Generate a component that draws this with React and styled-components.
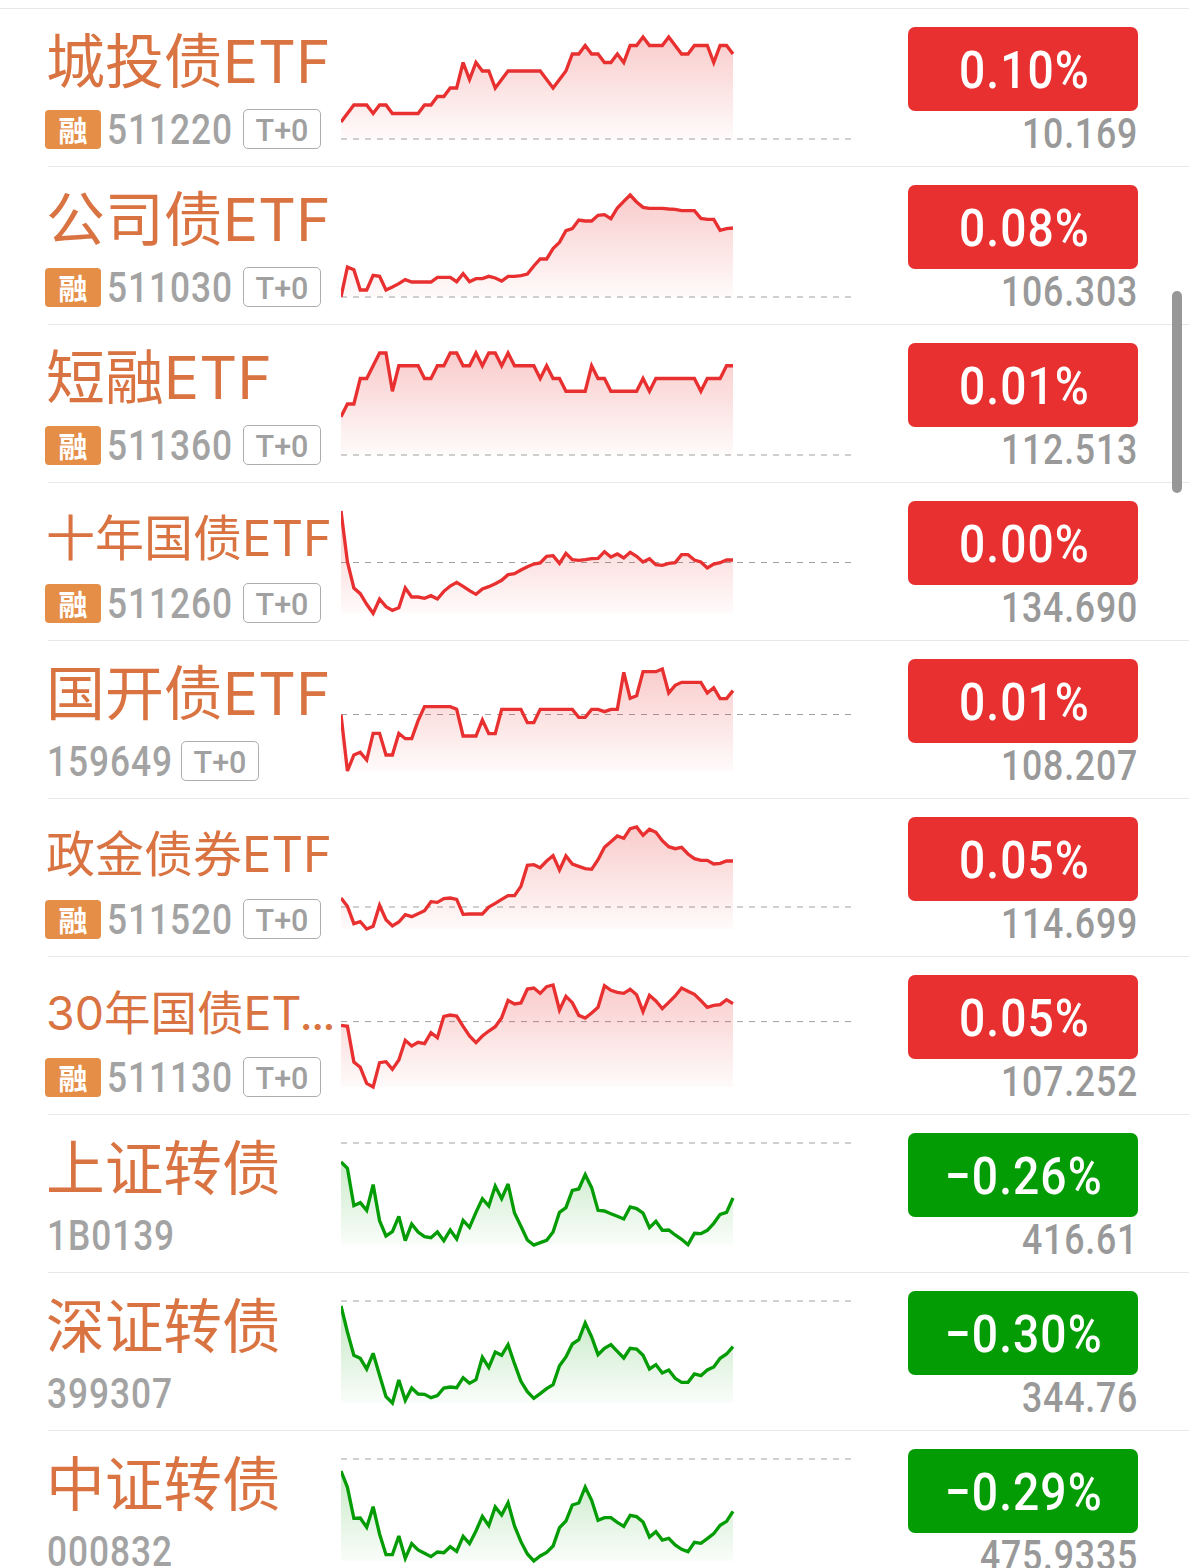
import React from 'react';
import styled, { createGlobalStyle } from 'styled-components';

// Chart samples are y positions in 1/3 px, counted down from the row divider.
const BOTTOM = 393;
const RANGE = 306;
const STEP = 1176 / 61;

const fromTicks = (ticks, max) => ticks.map((t) => BOTTOM - (t * RANGE) / max);

const rows = [
  {
    name: '城投债ETF', code: '511220', margin: true, t0: true, change: '0.10%', price: '10.169', base: 393,
    data: fromTicks([
      2, 3, 4, 4, 4, 3, 4, 4, 3, 3, 3, 3, 3, 4, 4, 5, 5, 6, 6, 9, 7, 9, 8, 8, 6, 7, 8, 8, 8, 8, 8, 8, 7, 6, 7, 8, 10, 10,
      11, 10, 10, 9, 9, 10, 9, 11, 11, 12, 11, 11, 11, 12, 11, 10, 10, 11, 11, 11, 9, 11, 11, 10,
    ], 12),
  },
  {
    name: '公司债ETF', code: '511030', margin: true, t0: true, change: '0.08%', price: '106.303', base: 393,
    data: [
      393, 303, 311, 372, 372, 328, 331, 372, 363, 353, 341, 348, 348, 348, 348, 334, 334, 334, 347, 323, 347, 338, 338,
      331, 336, 345, 331, 331, 329, 324, 300, 279, 279, 248, 229, 194, 188, 162, 165, 165, 148, 146, 158, 126, 106, 87,
      108, 124, 127, 127, 127, 129, 130, 134, 134, 134, 157, 160, 160, 193, 188, 186,
    ],
  },
  {
    name: '短融ETF', code: '511360', margin: true, t0: true, change: '0.01%', price: '112.513', base: 393,
    data: fromTicks([
      3, 4, 4, 6, 6, 7, 8, 8, 5, 7, 7, 7, 7, 6, 6, 7, 7, 8, 8, 7, 7, 8, 7, 8, 8, 7, 8, 7, 7, 7, 7, 6, 7, 6, 6, 5, 5, 5,
      5, 7, 6, 6, 5, 5, 5, 5, 5, 6, 5, 6, 6, 6, 6, 6, 6, 6, 5, 6, 6, 6, 7, 7,
    ], 8),
  },
  {
    name: '十年国债ETF', size: 'small', code: '511260', margin: true, t0: true, change: '0.00%', price: '134.690', base: 241.5,
    data: [
      87, 240, 318, 335, 367, 394, 351, 374, 385, 377, 318, 345, 345, 349, 341, 351, 328, 312, 301, 313, 326, 337, 321,
      314, 305, 295, 278, 275, 264, 254, 246, 243, 223, 221, 244, 214, 233, 235, 233, 230, 229, 209, 225, 216, 228, 211,
      223, 240, 230, 248, 250, 244, 242, 218, 218, 234, 240, 258, 246, 242, 234, 234,
    ],
  },
  {
    name: '国开债ETF', code: '159649', t0: true, change: '0.01%', price: '108.207', base: 223.5,
    data: [
      224, 393, 345, 337, 360, 280, 280, 345, 345, 280, 296, 296, 242, 200, 200, 200, 200, 200, 208, 288, 288, 288, 240,
      281, 281, 208, 208, 208, 208, 248, 248, 208, 208, 208, 208, 208, 208, 232, 232, 208, 208, 215, 208, 208, 97, 175,
      167, 95, 95, 95, 87, 159, 136, 127, 127, 127, 127, 159, 143, 176, 176, 152,
    ],
  },
  {
    name: '政金债券ETF', size: 'small', code: '511520', margin: true, t0: true, change: '0.05%', price: '114.699', base: 327,
    data: [
      300, 325, 377, 371, 393, 385, 322, 365, 384, 372, 350, 356, 347, 338, 311, 313, 302, 300, 304, 349, 348, 348, 348,
      327, 316, 304, 293, 293, 265, 202, 200, 209, 189, 173, 216, 174, 198, 205, 212, 214, 185, 148, 131, 114, 121, 92,
      87, 112, 94, 103, 128, 146, 152, 148, 168, 182, 187, 187, 198, 196, 189, 189,
    ],
  },
  {
    name: '30年国债ET', clipped: true, size: 'tiny', code: '511130', margin: true, t0: true, change: '0.05%', price: '107.252', base: 196.8,
    data: [
      208, 211, 318, 334, 382, 393, 320, 317, 340, 312, 253, 270, 259, 263, 230, 245, 181, 177, 180, 211, 240, 260, 240,
      225, 212, 185, 133, 144, 141, 99, 96, 112, 92, 87, 162, 121, 140, 178, 186, 171, 154, 89, 103, 109, 112, 100, 116,
      167, 118, 135, 158, 139, 120, 96, 106, 115, 134, 154, 148, 146, 131, 143,
    ],
  },
  {
    name: '上证转债', size: 'index', code: '1B0139', down: true, change: '−0.26%', price: '416.61', base: 87,
    data: [
      144, 163, 275, 266, 289, 212, 320, 366, 353, 307, 380, 330, 354, 368, 371, 354, 380, 348, 375, 319, 340, 295, 254,
      276, 216, 254, 210, 297, 337, 378, 393, 386, 379, 354, 295, 281, 229, 225, 182, 221, 289, 291, 299, 307, 315, 279,
      284, 297, 341, 322, 349, 348, 363, 376, 392, 358, 359, 349, 328, 301, 295, 252,
    ],
  },
  {
    name: '深证转债', size: 'index', code: '399307', down: true, change: '−0.30%', price: '344.76', base: 87,
    data: [
      102, 180, 250, 259, 291, 244, 310, 374, 393, 324, 385, 348, 366, 367, 377, 371, 348, 345, 347, 317, 334, 323, 256,
      286, 240, 250, 218, 275, 328, 359, 379, 365, 350, 338, 281, 255, 216, 203, 153, 195, 248, 229, 218, 238, 258, 229,
      231, 250, 291, 278, 303, 294, 319, 331, 331, 306, 311, 294, 285, 259, 246, 224,
    ],
  },
  {
    name: '中证转债', size: 'index', code: '000832', down: true, change: '−0.29%', price: '475.9335', base: 87,
    data: [
      123, 172, 265, 264, 292, 230, 312, 374, 374, 318, 385, 341, 360, 370, 380, 366, 368, 350, 364, 319, 341, 303, 259,
      287, 231, 255, 218, 288, 335, 372, 393, 378, 367, 348, 293, 273, 225, 219, 171, 211, 271, 263, 263, 277, 289, 256,
      260, 276, 321, 305, 330, 325, 345, 358, 365, 337, 340, 326, 311, 286, 274, 244,
    ],
  },
];

function Sparkline({ data, base, down }) {
  const color = down ? '#049c04' : '#e83030';
  const id = down ? 'fill-down' : 'fill-up';
  const line = data.map((y, i) => `${(i * STEP).toFixed(1)},${y}`).join(' ');

  return (
    <Chart viewBox="0 3 1530 471">
      <defs>
        <linearGradient id={id} gradientUnits="userSpaceOnUse" x1="0" y1="87" x2="0" y2={BOTTOM}>
          <stop offset="0" stopColor={color} stopOpacity="0.25" />
          <stop offset="1" stopColor={color} stopOpacity="0.02" />
        </linearGradient>
      </defs>
      <line x1="0" x2="1530" y1={base} y2={base} stroke="#a0a0a0" strokeWidth="3" strokeDasharray="18 18" />
      <polygon points={`0,${BOTTOM} ${line} 1176,${BOTTOM}`} fill={`url(#${id})`} />
      <polyline points={line} fill="none" stroke={color} strokeWidth="10" strokeMiterlimit="3" />
    </Chart>
  );
}

export default function App() {
  return (
    <Screen>
      <GlobalStyle />
      {rows.map((row) => (
        <Row key={row.code}>
          <Info>
            <Name $size={row.size}>
              {row.name}
              {row.clipped && <Dots>...</Dots>}
            </Name>
            <Meta>
              {row.margin && <MarginBadge>融</MarginBadge>}
              <Code $badge={row.margin}>{row.code}</Code>
              {row.t0 && <TradeTag>T+0</TradeTag>}
            </Meta>
          </Info>
          <Sparkline data={row.data} base={row.base} down={row.down} />
          <Quote>
            <Change $down={row.down}><span>{row.change}</span></Change>
            <Price>{row.price}</Price>
          </Quote>
        </Row>
      ))}
      <ScrollThumb />
    </Screen>
  );
}

const GlobalStyle = createGlobalStyle`
  * {
    box-sizing: border-box;
  }
  body {
    margin: 0;
    background: #fff;
    overflow: hidden;
  }
`;

const Screen = styled.div`
  position: relative;
  width: 1189px;
  height: 1568px;
  padding-top: 8px;
  overflow: hidden;
  background: #fff;
  font-family: Roboto, 'Noto Sans CJK SC', sans-serif;
`;

const Row = styled.div`
  display: grid;
  grid-template-columns: 293px 510px 230px;
  height: 158px;
  margin-left: 48px;
  border-top: 1px solid #e8e8e8;

  &:first-of-type {
    margin-left: 0;
    padding-left: 48px;
  }
`;

const Info = styled.div`
  min-width: 0;
  padding-top: 13px;
`;

const nameSizes = {
  regular: { font: 58.9, line: 79 },
  index: { font: 58.7, line: 82 },
  small: { font: 49, line: 86 },
  tiny: { font: 46.5, line: 86 },
};

const Name = styled.div`
  height: 75px;
  margin-left: -2px;
  line-height: ${({ $size = 'regular' }) => nameSizes[$size].line}px;
  font-family: Inter, 'Noto Sans CJK SC', sans-serif;
  font-size: ${({ $size = 'regular' }) => nameSizes[$size].font}px;
  color: #d97341;
  white-space: nowrap;
`;

const Dots = styled.span`
  margin-left: -2px;
  letter-spacing: -2px;
`;

const Meta = styled.div`
  display: flex;
  align-items: center;
  height: 40px;
  margin-top: 12px;
`;

const MarginBadge = styled.span`
  width: 56px;
  height: 39px;
  margin: 0 6px 0 -3px;
  border-radius: 4px;
  background: #e58e48;
  color: #fff;
  font-family: 'Noto Sans CJK SC', sans-serif;
  font-size: 29px;
  font-weight: 700;
  line-height: 38px;
  text-align: center;
`;

const Code = styled.span`
  width: 136px;
  margin-left: ${({ $badge }) => ($badge ? 0 : -1)}px;
  margin-right: ${({ $badge }) => ($badge ? 0 : -2)}px;
  transform: scaleX(0.84);
  transform-origin: left;
  font-size: 42px;
  font-weight: 500;
  letter-spacing: 1.1px;
  line-height: 40px;
  padding-top: 2px;
  color: #a3a3a3;
`;

const TradeTag = styled.span`
  width: 78px;
  height: 40px;
  padding-top: 2px;
  border: 1.5px solid #adadad;
  border-radius: 5px;
  color: #a0a0a0;
  font-size: 30.5px;
  font-weight: 500;
  line-height: 38px;
  text-align: center;
`;

const Chart = styled.svg`
  display: block;
  width: 510px;
  height: 157px;
`;

const Quote = styled.div`
  width: 230px;
  margin-left: 57px;
  padding-top: 18px;
`;

const Change = styled.div`
  display: flex;
  align-items: center;
  justify-content: center;
  height: 84px;
  padding: 1px 0 0 2px;
  border-radius: 7px;
  background: ${({ $down }) => ($down ? '#049c04' : '#e83030')};
  color: #fff;
  font-size: 52.5px;
  font-weight: 500;

  span {
    transform: scaleX(0.88);
    letter-spacing: 1.2px;
  }
`;

const Price = styled.div`
  margin-top: 2px;
  transform: scaleX(0.85);
  transform-origin: right;
  font-size: 42px;
  font-weight: 500;
  letter-spacing: 0.9px;
  line-height: 42px;
  color: #999;
  text-align: right;
`;

const ScrollThumb = styled.div`
  position: absolute;
  top: 291px;
  right: 7px;
  width: 10px;
  height: 202px;
  border-radius: 5px;
  background: #979797;
`;
